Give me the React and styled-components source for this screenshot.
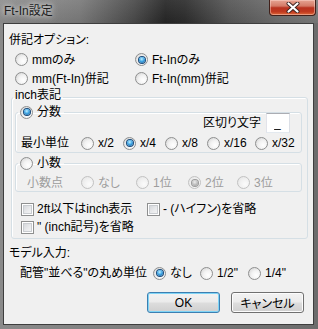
import React from 'react';
import styled, { createGlobalStyle } from 'styled-components';

const GlobalStyle = createGlobalStyle`
  html, body { margin: 0; padding: 0; background: #6f6f6f; }
  body {
    font-family: "Liberation Sans", "Noto Sans CJK JP", sans-serif;
    font-size: 12px;
    font-feature-settings: "palt";
    color: #000;
  }
  * { box-sizing: border-box; }
`;

const Window = styled.div`
  width: 318px;
  height: 329px;
  display: flex;
  flex-direction: column;
  background: linear-gradient(to right, #8a8a8a 0%, #7c7c7c 50%, #6c6c6c 100%);
`;

const TitleBar = styled.div`
  height: 23px;
  flex: none;
  display: flex;
  justify-content: space-between;
  align-items: flex-start;
  padding: 0 2px 0 4px;
  background:
    linear-gradient(to bottom, rgba(255,255,255,0.08), rgba(0,0,0,0.05)),
    linear-gradient(to right, #8e8e8e 0%, #7a7a7a 25%, #4a4a4a 42%, #262626 52%, #2c2c2c 58%, #555 72%, #6e6e6e 88%, #7a7a7a 100%);
`;

const Title = styled.div`
  line-height: 22px;
  color: #1c1c1c;
  text-shadow: 0 0 4px rgba(255,255,255,0.7), 0 0 8px rgba(255,255,255,0.5), 0 0 12px rgba(255,255,255,0.35);
`;

const CloseButton = styled.div`
  width: 47px;
  height: 16px;
  border: 1px solid #40201a;
  border-top: none;
  border-radius: 0 0 4px 4px;
  display: flex;
  align-items: center;
  justify-content: center;
  background: linear-gradient(to bottom, #e6a493 0%, #d47a66 40%, #b8321f 52%, #c0391f 78%, #de6a3a 100%);
  box-shadow: inset 0 0 0 1px rgba(255,220,210,0.45);
`;

const Client = styled.div`
  flex: 1;
  margin: 0 4px 4px 3px;
  border: 1px solid #3e3e3e;
  background: #f0f0f0;
  padding: 8px 5px 0 5px;
  display: flex;
  flex-direction: column;
`;

const SectionLabel = styled.div`
  line-height: 16px;
  margin-top: ${p => p.$top || 0}px;
`;

const OptionGrid = styled.div`
  display: grid;
  grid-template-columns: 120px auto;
  grid-auto-rows: 19px;
  margin: 2px 0 0 6px;
`;

const Option = styled.label`
  display: flex;
  align-items: center;
  line-height: 16px;
  white-space: nowrap;
  color: ${p => (p.$disabled ? '#9d9d9d' : '#000')};
`;

const RadioMark = styled.span`
  width: 13px;
  height: 13px;
  flex: none;
  border-radius: 50%;
  margin-right: 4px;
  border: 1px solid ${p => (p.$disabled ? '#c2c2c2' : '#8e8f8f')};
  background: ${p =>
    p.$disabled
      ? 'radial-gradient(circle at 65% 65%, #fbfbfb 0%, #efefef 55%, #e0e0e0 100%)'
      : 'radial-gradient(circle at 65% 65%, #ffffff 0%, #f2f2f2 45%, #cfcfcf 100%)'};
  display: flex;
  align-items: center;
  justify-content: center;
  &::after {
    content: '';
    display: ${p => (p.$checked ? 'block' : 'none')};
    width: 6px;
    height: 6px;
    border-radius: 50%;
    background: ${p =>
      p.$disabled
        ? 'radial-gradient(circle at 45% 35%, #eeeeee 0%, #b5b5b5 60%, #8d8d8d 100%)'
        : 'radial-gradient(circle at 45% 35%, #c4f0ff 0%, #42a8e6 45%, #0d4b87 100%)'};
    box-shadow: 0 0 0 1px ${p => (p.$disabled ? '#9a9a9a' : '#1a4a7a')};
  }
`;

const CheckMark = styled.span`
  width: 13px;
  height: 13px;
  flex: none;
  margin-right: 3px;
  border: 1px solid #8e8f8f;
  background: linear-gradient(135deg, #cdd0d4 0%, #e9eaec 55%, #f8f8f8 100%);
  box-shadow: inset 0 0 0 1px #fff, inset 0 0 0 2px #c9ccd0;
`;

const Radio = ({ checked, disabled, children }) => (
  <Option $disabled={disabled}>
    <RadioMark $checked={checked} $disabled={disabled} />
    {children}
  </Option>
);

const Check = ({ children }) => (
  <Option>
    <CheckMark />
    {children}
  </Option>
);

const Group = styled.fieldset`
  margin: -1px 0 0 2px;
  padding: 0 0 2px 0;
  border: 1px solid #d5dfe5;
  border-radius: 3px;
  min-width: 0;
  box-shadow: inset 1px 1px 0 #fff;
`;

const GroupLegend = styled.legend`
  line-height: 16px;
  padding: 0 2px 4px;
  margin-left: 1px;
`;

const SubGroup = styled.fieldset`
  margin: ${p => p.$top}px 5px 0 3px;
  padding: 0;
  border: 1px solid #d5dfe5;
  border-radius: 3px;
  min-width: 0;
  box-shadow: inset 1px 1px 0 #fff;
`;

const SubLegend = styled.legend`
  padding: 0 3px 0 2px;
  margin-left: 2px;
`;

const DelimRow = styled.div`
  display: flex;
  justify-content: flex-end;
  align-items: center;
  gap: 5px;
  height: 20px;
  margin-top: -7px;
  padding-right: 11px;
  line-height: 16px;
`;

const DelimInput = styled.input`
  width: 24px;
  height: 20px;
  margin: 0;
  padding: 0 0 0 7px;
  border: 1px solid;
  border-color: #abadb3 #dbdfe6 #e3e9ef #e2e3ea;
  background: #fff;
  font: inherit;
  color: #000;
  outline: none;
`;

const ChoiceRow = styled.div`
  display: grid;
  grid-template-columns: ${p => p.$cols};
  align-items: center;
  height: ${p => p.$h || 18}px;
  margin-top: ${p => p.$top || 0}px;
  padding-left: ${p => p.$left || 0}px;
  line-height: 16px;
  white-space: nowrap;
  color: ${p => (p.$disabled ? '#9d9d9d' : '#000')};
`;

const CheckGrid = styled.div`
  display: grid;
  grid-template-columns: 126px auto;
  grid-auto-rows: 18px;
  margin: 8px 0 0 9px;
`;

const ButtonRow = styled.div`
  display: flex;
  justify-content: flex-end;
  gap: 11px;
  margin-top: 10px;
  padding-right: 4px;
`;

const Button = styled.button`
  width: 73px;
  height: 21px;
  padding: 0;
  font: inherit;
  color: #000;
  border-radius: 3px;
  border: 1px solid ${p => (p.$default ? '#3c7fb1' : '#707070')};
  background: linear-gradient(to bottom, #f2f2f2 0%, #ebebeb 48%, #dddddd 52%, #cfcfcf 100%);
  box-shadow: inset 0 0 0 1px ${p => (p.$default ? '#7fd4f6' : '#fcfcfc')};
`;

const CloseIcon = () => (
  <svg width="14" height="11" viewBox="0 0 14 11">
    <path d="M2.5 1.5 L11.5 9.5 M11.5 1.5 L2.5 9.5" stroke="#3b2320" strokeWidth="4" strokeLinecap="round" />
    <path d="M2.5 1.5 L11.5 9.5 M11.5 1.5 L2.5 9.5" stroke="#ffffff" strokeWidth="2.2" strokeLinecap="round" />
  </svg>
);

export default function App() {
  return (
    <>
      <GlobalStyle />
      <Window>
        <TitleBar>
          <Title>Ft-In設定</Title>
          <CloseButton>
            <CloseIcon />
          </CloseButton>
        </TitleBar>
        <Client>
          <SectionLabel>併記オプション:</SectionLabel>
          <OptionGrid>
            <Radio>mmのみ</Radio>
            <Radio checked>Ft-Inのみ</Radio>
            <Radio>mm(Ft-In)併記</Radio>
            <Radio>Ft-In(mm)併記</Radio>
          </OptionGrid>

          <Group>
            <GroupLegend>inch表記</GroupLegend>
            <SubGroup $top={-3}>
              <SubLegend>
                <Radio checked>分数</Radio>
              </SubLegend>
              <DelimRow>
                <span>区切り文字</span>
                <DelimInput readOnly value="_" />
              </DelimRow>
              <ChoiceRow $cols="60px 42px 42px 42px 48px auto" $left={5} $top={1}>
                <span>最小単位</span>
                <Radio>x/2</Radio>
                <Radio checked>x/4</Radio>
                <Radio>x/8</Radio>
                <Radio>x/16</Radio>
                <Radio>x/32</Radio>
              </ChoiceRow>
            </SubGroup>
            <SubGroup $top={2}>
              <SubLegend>
                <Radio>小数</Radio>
              </SubLegend>
              <ChoiceRow $cols="54px 55px 52px 49px auto" $left={11} $top={3} $h={17} $disabled>
                <span>小数点</span>
                <Radio disabled>なし</Radio>
                <Radio disabled>1位</Radio>
                <Radio disabled checked>2位</Radio>
                <Radio disabled>3位</Radio>
              </ChoiceRow>
            </SubGroup>
            <CheckGrid>
              <Check>2ft以下はinch表示</Check>
              <Check>- (ハイフン)を省略</Check>
              <Check>" (inch記号)を省略</Check>
            </CheckGrid>
          </Group>

          <SectionLabel $top={6}>モデル入力:</SectionLabel>
          <ChoiceRow $cols="133px 47px 48px auto" $left={11} $top={3}>
            <span>配管"並べる"の丸め単位</span>
            <Radio checked>なし</Radio>
            <Radio>1/2"</Radio>
            <Radio>1/4"</Radio>
          </ChoiceRow>

          <ButtonRow>
            <Button $default>OK</Button>
            <Button>キャンセル</Button>
          </ButtonRow>
        </Client>
      </Window>
    </>
  );
}
